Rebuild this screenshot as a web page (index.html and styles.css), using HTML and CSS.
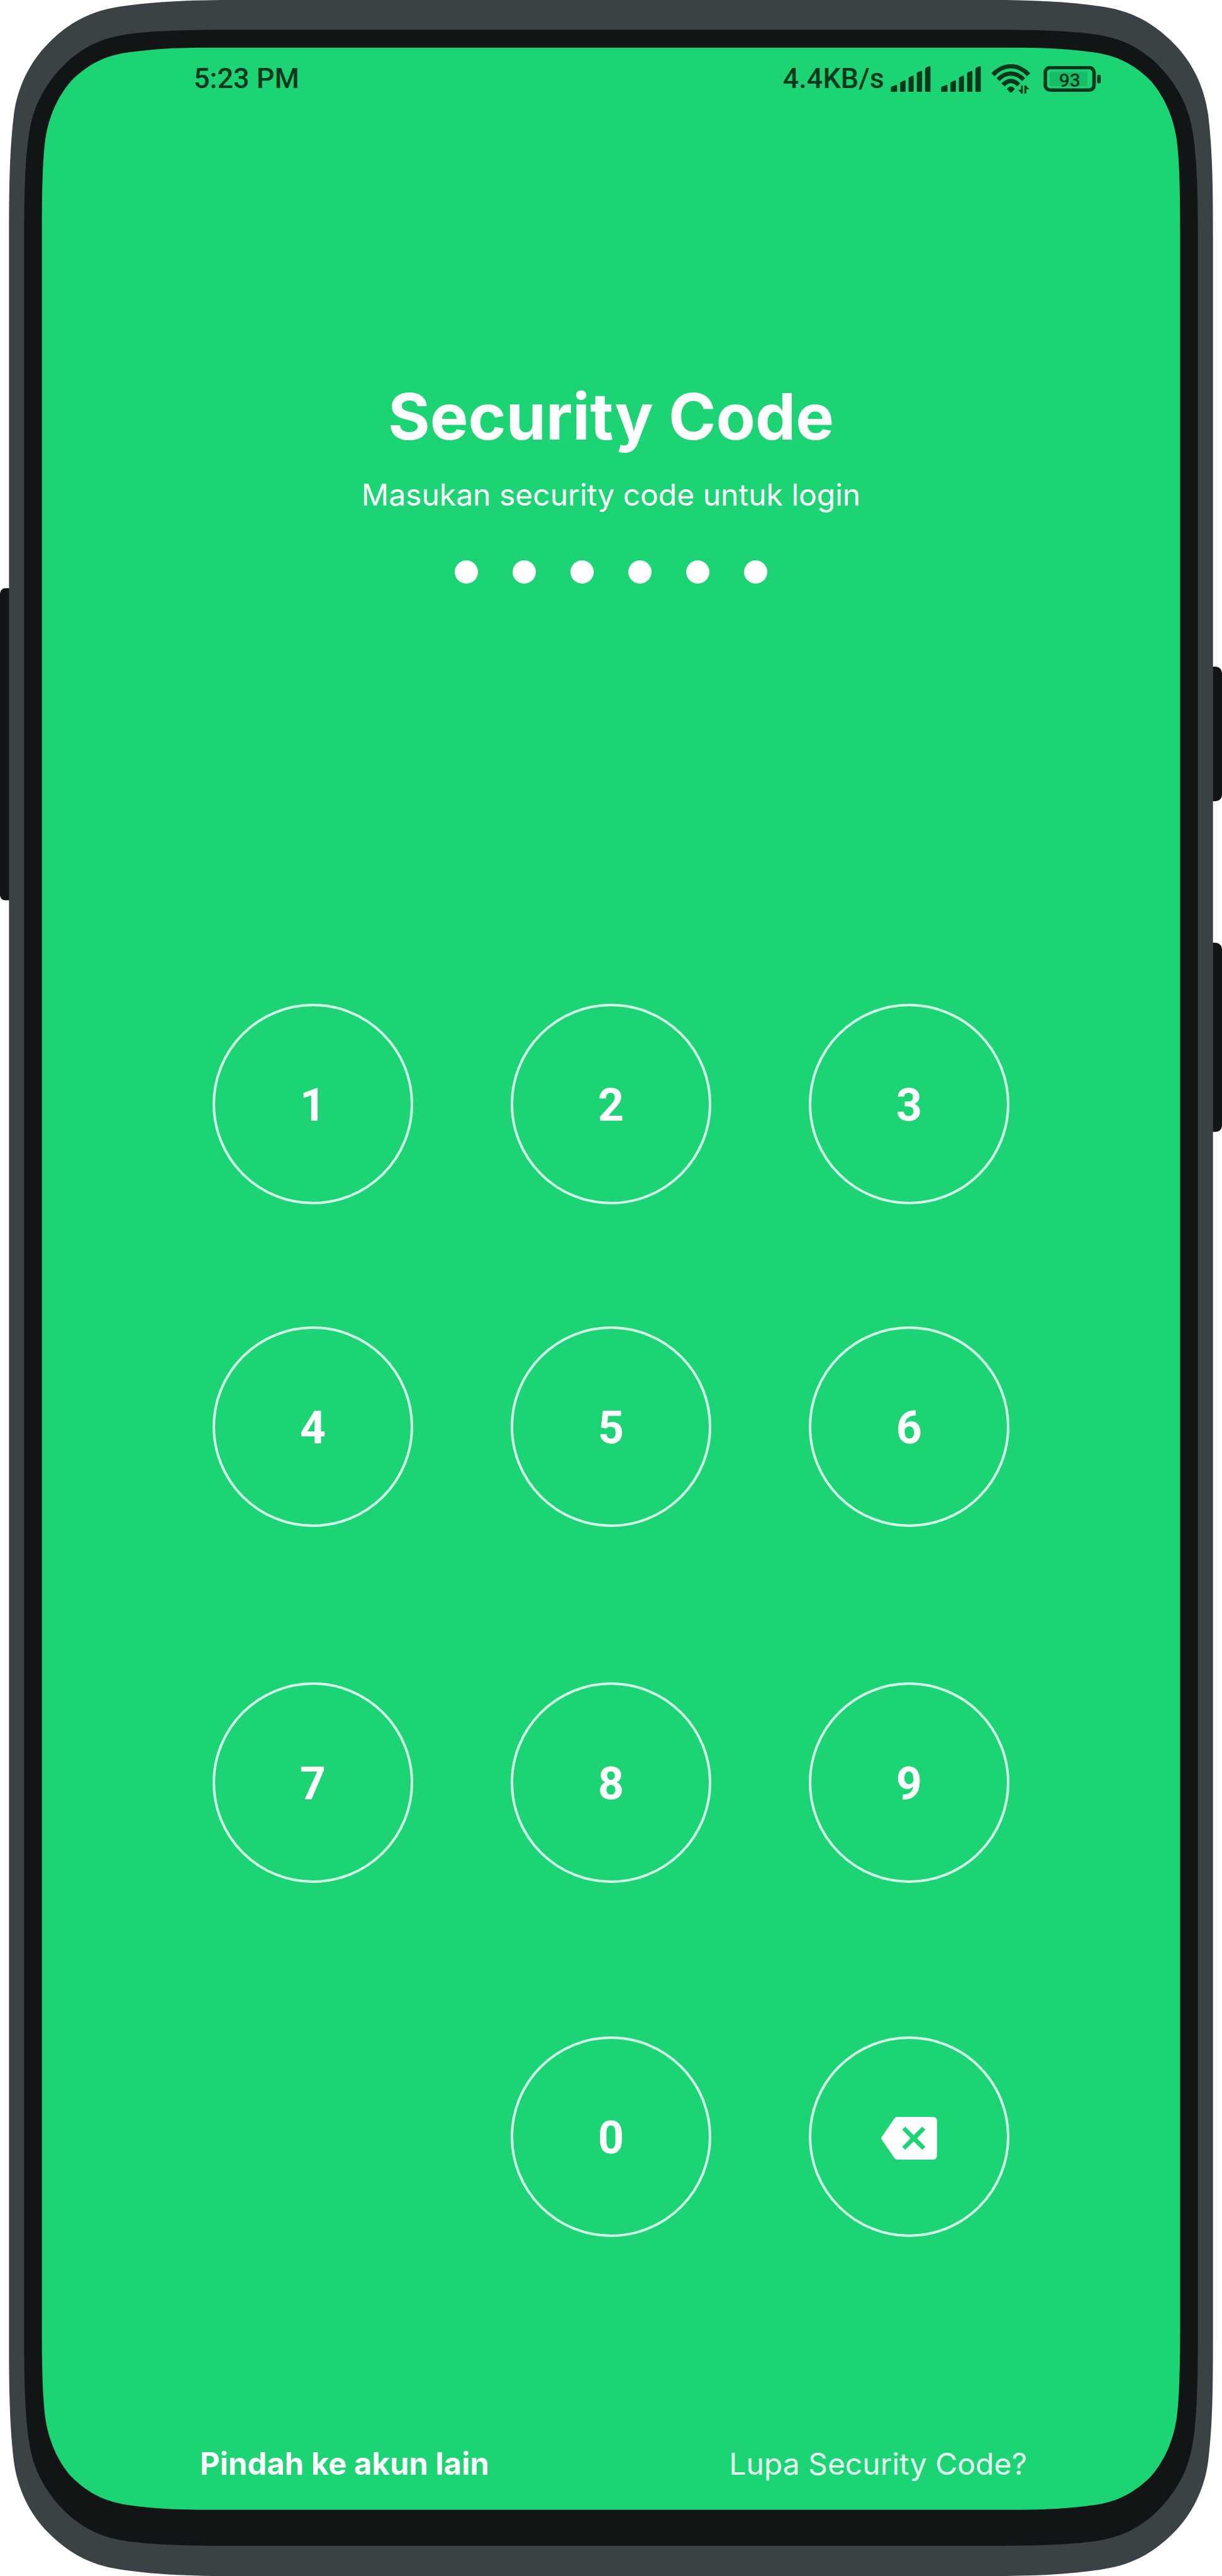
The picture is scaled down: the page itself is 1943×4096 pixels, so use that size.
FILE: index.html
```html
<!DOCTYPE html>
<html lang="id">
<head>
<meta charset="utf-8">
<meta name="viewport" content="width=device-width, initial-scale=1">
<title>Security Code</title>
<link rel="stylesheet" href="styles.css">
</head>
<body>
<div class="phone">
  <svg class="phone-body" viewBox="0 0 2306 4861" preserveAspectRatio="none" aria-hidden="true">
    <g fill="#111516">
      <rect x="0" y="1110" width="40" height="589" rx="10"/>
      <rect x="2266" y="1258" width="40" height="254" rx="12"/>
      <rect x="2266" y="1779" width="40" height="357" rx="12"/>
    </g>
    <path fill="#3b4245" d="M17 450C17 350 18 285 26 217C33 165 55 118 92 81C129 44 170 20 230 12C290 3 360 0 436 0H1870C1946 0 2016 3 2076 12C2136 20 2177 44 2214 81C2251 118 2273 165 2280 217C2288 285 2289 350 2289 450V4411C2289 4511 2288 4576 2280 4644C2273 4696 2251 4743 2214 4780C2177 4817 2136 4841 2076 4849C2016 4858 1946 4861 1870 4861H436C360 4861 290 4858 230 4849C170 4841 129 4817 92 4780C55 4743 33 4696 26 4644C18 4576 17 4511 17 4411Z"/>
    <path fill="#111516" d="M45.500 450C45.500 370 47 290 57 240C66 192 92 148 132 112C168 82 200 70 245 64C300 57 370 56 440 56H1866C1936 56 2006 57 2061 64C2106 70 2138 82 2174 112C2214 148 2240 192 2249 240C2259 290 2260.500 370 2260.500 450V4410C2260.500 4490 2259 4570 2249 4620C2240 4668 2214 4712 2174 4748C2138 4778 2106 4790 2061 4796C2006 4803 1936 4804 1866 4804H440C370 4804 300 4803 245 4796C200 4790 168 4778 132 4748C92 4712 66 4668 57 4620C47 4570 45.500 4490 45.500 4410Z"/>
    <path fill="#1dd475" d="M79 440C79 370 80 300 86 260C94 210 115 175 134 153C170 117 205 103 249 98C300 91 350 90 400 90H1906C1956 90 2006 91 2057 98C2101 103 2136 117 2172 153C2191 175 2212 210 2220 260C2226 300 2227 370 2227 440V4386C2227 4456 2226 4526 2220 4566C2212 4616 2191 4651 2172 4673C2136 4709 2101 4723 2057 4728C2006 4735 1956 4736 1906 4736H400C350 4736 300 4735 249 4728C205 4723 170 4709 134 4673C115 4651 94 4616 86 4566C80 4526 79 4456 79 4386Z"/>
  </svg>

  <div class="screen">
    <header class="status-bar">
      <span class="status-text">5:23 PM</span>
      <div class="status-icons">
        <span class="status-text">4.4KB/s</span>
        <svg class="signal" viewBox="60 66 226 147" role="img" aria-label="SIM 1">
          <path fill="currentColor" d="M60 209V189Q60 185 64 183L90 174Q96 172 96 178V209Q96 213 92 213H64Q60 213 60 209ZM113 209V163Q113 159 117 157L138 148Q144 146 144 152V209Q144 213 140 213H117Q113 213 113 209ZM161 209V136Q161 132 165 130L184 121Q190 119 190 125V209Q190 213 186 213H165Q161 213 161 209ZM208 209V108Q208 104 212 102L232 94Q238 92 238 98V209Q238 213 234 213H212Q208 213 208 209ZM255 209V84Q255 78 260 75L280 67Q286 65 286 71V209Q286 213 282 213H259Q255 213 255 209Z"/>
        </svg>
        <svg class="signal" viewBox="60 66 226 147" role="img" aria-label="SIM 2">
          <path fill="currentColor" d="M60 209V189Q60 185 64 183L90 174Q96 172 96 178V209Q96 213 92 213H64Q60 213 60 209ZM113 209V163Q113 159 117 157L138 148Q144 146 144 152V209Q144 213 140 213H117Q113 213 113 209ZM161 209V136Q161 132 165 130L184 121Q190 119 190 125V209Q190 213 186 213H165Q161 213 161 209ZM208 209V108Q208 104 212 102L232 94Q238 92 238 98V209Q238 213 234 213H212Q208 213 208 209ZM255 209V84Q255 78 260 75L280 67Q286 65 286 71V209Q286 213 282 213H259Q255 213 255 209Z"/>
        </svg>
        <svg class="wifi" viewBox="634 57 220 168" role="img" aria-label="Wi-Fi">
          <g fill="none" stroke="currentColor" stroke-width="25">
            <path d="M643 117Q690 69 745 69T846 117"/>
            <path d="M672 145Q705 111 745 111T818 145"/>
            <path d="M701 176Q720 153 745 153T789 176"/>
          </g>
          <path fill="currentColor" d="M722 198Q745 170 768 198L749 218Q745 221 741 218ZM803 178H813V225H806L786 203H803ZM822 178H830L850 200H833V224H822Z"/>
        </svg>
        <svg class="battery" viewBox="925 64 328 147" role="img" aria-label="93%">
          <rect x="959" y="97" width="217" height="82" rx="8" fill="#17be67"/>
          <rect x="935" y="73" width="278" height="128" rx="28" fill="none" stroke="currentColor" stroke-width="20"/>
          <rect x="1231" y="113" width="20" height="50" rx="9" fill="currentColor"/>
          <text class="battery-level" x="1074" y="182" text-anchor="middle" fill="currentColor">93</text>
        </svg>
      </div>
    </header>

    <main class="login">
      <h1 class="title">Security Code</h1>
      <p class="subtitle">Masukan security code untuk login</p>
      <div class="dots" role="img" aria-label="6 digit">
        <span class="dot"></span><span class="dot"></span><span class="dot"></span><span class="dot"></span><span class="dot"></span><span class="dot"></span>
      </div>
      <div class="keypad">
        <button class="key" type="button">1</button>
        <button class="key" type="button">2</button>
        <button class="key" type="button">3</button>
        <button class="key" type="button">4</button>
        <button class="key" type="button">5</button>
        <button class="key" type="button">6</button>
        <button class="key" type="button">7</button>
        <button class="key" type="button">8</button>
        <button class="key" type="button">9</button>
        <button class="key key-zero" type="button">0</button>
        <button class="key" type="button" aria-label="Hapus">
          <svg class="backspace" viewBox="492 518 316 242" aria-hidden="true">
            <path fill="currentColor" fill-rule="evenodd" d="M582 518H786Q808 520 808 542V734Q808 758 784 760H584Q572 758 565 748L495 646Q490 639 495 632L563 532Q570 520 582 518ZM628 573L611 590L658 639L611 687L628 704L676 657L724 704L742 687L695 639L742 590L724 573L676 621Z"/>
          </svg>
        </button>
      </div>
    </main>

    <footer class="links">
      <a class="link link-strong" href="#akun">Pindah ke akun lain</a>
      <a class="link" href="#lupa">Lupa Security Code?</a>
    </footer>
  </div>
</div>
</body>
</html>
```
FILE: styles.css
```css
* {
  box-sizing: border-box;
}

body {
  margin: 0;
  background: #fff;
  color: #fff;
  font-family: Inter, "Liberation Sans", sans-serif;
}

.phone {
  position: relative;
  min-height: 100vh;
  display: flex;
}

/* device drawing behind the screen content */
.phone-body {
  position: absolute;
  inset: 0;
  width: 100%;
  height: 100%;
}

.screen {
  position: relative;
  flex: 1;
  display: flex;
  flex-direction: column;
  padding: 96px 192px 148px 308px;
}

.status-bar {
  display: flex;
  align-items: center;
  justify-content: space-between;
  height: 58px;
  color: #04381c;
}

.status-text {
  font: 500 45px/56px Roboto, sans-serif;
}

.status-icons {
  display: flex;
  align-items: center;
  gap: 16px;
}

.status-icons .status-text {
  margin-right: -6px;
}

.signal {
  width: 64px;
  height: 41px;
}

.wifi {
  width: 62px;
  height: 47px;
}

.battery {
  width: 92px;
  height: 41px;
  margin-left: 5px;
}

.battery-level {
  font: 500 108px Roboto, sans-serif;
}

.login {
  flex: 1;
  display: flex;
  flex-direction: column;
  align-items: center;
  margin-right: 116px;
  padding-top: 446px;
}

.title {
  margin: 0;
  font-size: 102px;
  line-height: 124px;
  font-weight: 700;
}

.subtitle {
  margin: 33px 0 74px;
  font-size: 48px;
  line-height: 60px;
}

.dots {
  display: flex;
  gap: 55px;
}

.dot {
  width: 37px;
  height: 37px;
  border-radius: 50%;
  background: #fff;
}

.keypad {
  display: grid;
  grid-template-columns: repeat(3, 319px);
  grid-template-rows: 513px 566px 563px 319px;
  column-gap: 155px;
  margin-top: 668px;
}

.key {
  display: flex;
  align-items: center;
  justify-content: center;
  height: 319px;
  padding: 5px 0 0;
  border: 4px solid #d4ffeb;
  border-radius: 50%;
  background: none;
  color: #fff;
  font: 700 72px/86px Roboto, sans-serif;
}

.key-zero {
  grid-column: 2;
}

.backspace {
  width: 89px;
  height: 68px;
}

.links {
  display: flex;
  justify-content: space-between;
  margin: 0 118px 0 10px;
}

.link {
  color: #e6fff3;
  font-size: 48px;
  line-height: 60px;
  text-decoration: none;
}

.link-strong {
  color: #fff;
  font-size: 49px;
  font-weight: 700;
}
```
